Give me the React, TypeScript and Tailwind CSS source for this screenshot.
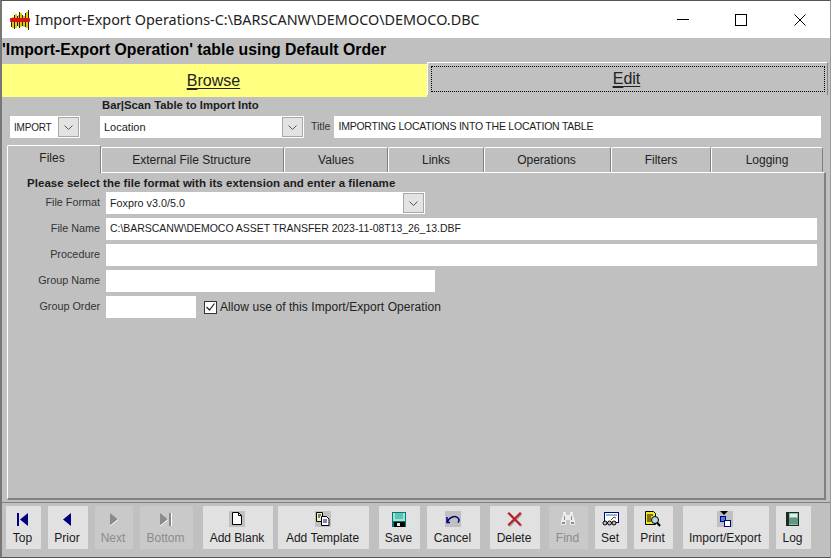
import type { ReactNode } from "react";

function Logo() {
  return (
    <svg width="20" height="20" viewBox="0 0 20 20">
      <path d="M1 8h1v9H1zM4 5h1v14H4zM7 6h1v10H7zM9 2h1v16H9zM12 5h1v11h-1zM15 3h1v14h-1zM18 0h1v20h-1z" fill="#2e2400" />
      <path d="M2 7h2v11H2zM5 4h2v14H5zM8 5h1v12H8zM10 3h2v14h-2zM13 6h2v11h-2zM16 2h2v16h-2z" fill="#d8c820" />
      <rect x="0" y="8" width="20" height="4" rx="1" fill="#e01010" />
    </svg>
  );
}

function ComboArrow() {
  return (
    <span className="flex items-center justify-center w-[21px] h-[20px] mr-[1px] bg-[#e3e3e3] border border-[#a8a8a8]">
      <svg width="9" height="5" viewBox="0 0 9 5" fill="none" stroke="#555" strokeWidth="1">
        <path d="M0.500 0.500 4.500 4.500 8.500 0.500" />
      </svg>
    </span>
  );
}

const icons: Record<string, ReactNode> = {
  Top: (
    <svg width="13" height="13" viewBox="0 0 13 13">
      <path d="M1 0h2v13H1zM12 0v13L4 6.500z" fill="#00007f" />
    </svg>
  ),
  Prior: (
    <svg width="13" height="13" viewBox="0 0 13 13">
      <path d="M10 0v13L2 6.500z" fill="#00007f" />
    </svg>
  ),
  Next: (
    <svg width="13" height="13" viewBox="0 0 13 13">
      <path d="M3 0v13l8-6.500z" fill="#8a8a8a" />
      <path d="M3 13l8-6.500" stroke="#fff" strokeWidth="1" />
    </svg>
  ),
  Bottom: (
    <svg width="13" height="13" viewBox="0 0 13 13">
      <path d="M1 0v13l8-6.500zM10 0h2v13h-2z" fill="#8a8a8a" />
      <path d="M1 13l8-6.500M12.500 0v13" stroke="#fff" strokeWidth="1" />
    </svg>
  ),
  "Add Blank": (
    <span className="flex w-[16px] h-[16px] items-center justify-center bg-[#c0c0c0]">
      <svg width="12" height="14" viewBox="0 0 12 14" fill="#fff" stroke="#000">
        <path d="M1.500 0.500h6l3 3v9h-9z" />
        <path d="M7.500 0.500v3h3" fill="none" />
      </svg>
    </span>
  ),
  "Add Template": (
    <span className="flex w-[16px] h-[16px] items-center justify-center bg-[#c0c0c0]">
      <svg width="14" height="14" viewBox="0 0 14 14" fill="#fff" stroke="#000">
        <path d="M0.500 0.500h6v9h-6z" fill="#f8f4b0" />
        <path d="M5.500 4.500h5l2.500 2.500v6.500h-7.500z" />
        <path d="M2 3h3M2 5h2M7 8h4M7 10h4" strokeWidth="1" stroke="#00007f" />
      </svg>
    </span>
  ),
  Save: (
    <svg width="14" height="15" viewBox="0 0 14 15">
      <rect width="14" height="15" fill="#007878" />
      <rect x="1" y="1" width="12" height="8" fill="#a8e0d4" />
      <rect x="3" y="1" width="8" height="6" fill="#5cc4b4" />
      <rect x="2" y="10" width="11" height="5" fill="#000" />
      <rect x="5" y="11" width="3" height="3" fill="#e8e8e8" />
    </svg>
  ),
  Cancel: (
    <span className="flex w-[16px] h-[16px] items-center justify-center bg-[#c0c0c0]">
      <svg width="14" height="10" viewBox="0 0 14 10" fill="none" stroke="#00007f" strokeWidth="1.500">
        <path d="M4 8.500H1V3M1.500 7.500C3.500 3 9 1 12 4c1 1 1.200 3 0 4.500" />
      </svg>
    </span>
  ),
  Delete: (
    <svg width="15" height="15" viewBox="0 0 15 15" strokeWidth="2.200" strokeLinecap="square" fill="none">
      <path d="M3 2.500 14 13.500M14 2.500 3 13.500" stroke="#a8a8a8" />
      <path d="M2 1.500 13 12.500M13 1.500 2 12.500" stroke="#b82028" />
    </svg>
  ),
  Find: (
    <svg width="16" height="14" viewBox="0 0 16 14">
      <path d="M3 0h3v3h4V0h3v3l2 6v4h-5V8H6v5H1V9l2-6z" fill="#ececec" />
      <path d="M4 4h1v4H4zM11 4h1v4h-1zM2 10h3v2H2zM11 10h3v2h-3z" fill="#8e8e8e" />
    </svg>
  ),
  Set: (
    <svg width="17" height="14" viewBox="0 0 17 14" fill="none">
      <rect x="2.500" y="0.500" width="14" height="10" fill="#fff" stroke="#000080" />
      <path d="M4 3h11" stroke="#008080" />
      <path d="M9 8l3-3 2 1" stroke="#a02020" />
      <circle cx="3" cy="11" r="2" fill="#c0c0c0" stroke="#000" />
      <circle cx="7.500" cy="11" r="2" fill="#c0c0c0" stroke="#000" />
      <circle cx="12" cy="11" r="2" fill="#c0c0c0" stroke="#000" />
    </svg>
  ),
  Print: (
    <svg width="16" height="16" viewBox="0 0 16 16">
      <path d="M0.500 0.500h8l2 2v11h-10z" fill="#f2e82a" stroke="#000" />
      <path d="M2 4h6M2 6h4M2 8h4M2 10h4" stroke="#000" />
      <circle cx="10" cy="9" r="3.500" fill="#b8d8e8" stroke="#000" />
      <path d="M12 11.500l3 3.500" stroke="#000" strokeWidth="2" />
    </svg>
  ),
  "Import/Export": (
    <span className="flex w-[16px] h-[16px] items-center justify-center bg-[#c0c0c0]">
      <svg width="12" height="16" viewBox="0 0 12 16">
        <path d="M1 0h8L5 4z" fill="#000" />
        <rect x="1.500" y="5.500" width="5" height="5" fill="#5080e0" stroke="#000080" />
        <rect x="5.500" y="9.500" width="6" height="6" fill="#fff" stroke="#000080" />
      </svg>
    </span>
  ),
  Log: (
    <svg width="13" height="14" viewBox="0 0 13 14">
      <rect width="13" height="14" fill="#1c2c1c" />
      <rect x="3" y="1" width="9" height="12" fill="#8cc0ac" />
      <rect x="4" y="2" width="7" height="3" fill="#e4f0ea" />
      <path d="M3 7h9M3 9h9M3 11h9" stroke="#3c6c58" />
    </svg>
  ),
};

const tools = [
  { label: "Top", cls: "w-[35px]" },
  { label: "Prior", cls: "w-[40px] ml-[7px]" },
  { label: "Next", cls: "w-[38px] ml-[7px]", off: true },
  { label: "Bottom", cls: "w-[53px] ml-[7px]", off: true },
  { label: "Add Blank", cls: "w-[70px] ml-[10px]" },
  { label: "Add Template", cls: "w-[91px] ml-[5px]" },
  { label: "Save", cls: "w-[41px] ml-[10px]" },
  { label: "Cancel", cls: "w-[53px] ml-[7px]" },
  { label: "Delete", cls: "w-[50px] ml-[10px]" },
  { label: "Find", cls: "w-[39px] ml-[9px]", off: true },
  { label: "Set", cls: "w-[32px] ml-[7px]" },
  { label: "Print", cls: "w-[39px] ml-[7px]" },
  { label: "Import/Export", cls: "w-[86px] ml-[10px]" },
  { label: "Log", cls: "w-[35px] ml-[7px]" },
];

const tabs = [
  { label: "External File Structure", cls: "w-[183px] pr-[2px]" },
  { label: "Values", cls: "w-[104px]" },
  { label: "Links", cls: "w-[96px]" },
  { label: "Operations", cls: "w-[127px] pr-[2px]" },
  { label: "Filters", cls: "w-[100px]" },
  { label: "Logging", cls: "w-[112px]" },
];

function Row({ label, children }: { label: string; children: ReactNode }) {
  return (
    <div className="flex items-center h-[22px] mt-[4px] first:mt-0">
      <span className="w-[92px] pb-[1px] text-right text-[10.800px] text-[#333] leading-none">{label}</span>
      <div className="ml-[6px] flex">{children}</div>
    </div>
  );
}

export default function App() {
  return (
    <div className="flex flex-col w-[831px] h-[558px] overflow-hidden bg-[#c0c0c0] font-['Liberation_Sans',sans-serif] text-black border-t border-l-2 border-r border-b border-t-[#555] border-l-[#777] border-r-[#999] border-b-[#555]">
      {/* title bar */}
      <div className="flex items-center h-[37px] shrink-0 bg-white pl-[8px]">
        <Logo />
        <span className="ml-[5px] text-[14.400px] text-[#222] font-['Noto_Sans',sans-serif]">
          Import-Export Operations-C:\BARSCANW\DEMOCO\DEMOCO.DBC
        </span>
        <div className="ml-auto flex items-center pr-[24px]">
          <span className="w-[12px] h-[1px] bg-black" />
          <span className="ml-[46px] w-[12px] h-[12px] border border-black" />
          <svg className="ml-[47px]" width="12" height="12" viewBox="0 0 12 12" stroke="#000" fill="none">
            <path d="M0.500 0.500 11.500 11.500M11.500 0.500 0.500 11.500" />
          </svg>
        </div>
      </div>

      <div className="h-[26px] shrink-0 flex items-center text-[15.800px] font-bold leading-none pb-[3px]">
        'Import-Export Operation' table using Default Order
      </div>

      {/* browse / edit */}
      <div className="flex h-[33px] shrink-0 pr-[2px]">
        <div className="w-[425px] pr-[2px] bg-[#ffff80] flex items-center justify-center text-[16px] text-[#222]">
          <span className="underline underline-offset-2">
            <span className="decoration-2 underline underline-offset-2">B</span>rowse
          </span>
        </div>
        <div className="flex-1 h-[33px] -mt-[2px] border-t border-l border-r border-t-white border-l-white border-r-[#808080] pt-[3px] pl-[3px] pr-[2px]">
          <div className="h-[26px] pr-[3px] border border-dotted border-black flex items-center justify-center text-[16px] text-[#222]">
            <span className="underline underline-offset-2">
              <span className="decoration-2 underline underline-offset-2">E</span>dit
            </span>
          </div>
        </div>
      </div>

      {/* table chooser */}
      <div className="shrink-0 h-[41px] pl-[8px] pr-[9px]">
        <div className="h-[19px] pt-[3px] pl-[92px] text-[11.300px] font-bold leading-[11px] text-[#1c1c1c]">
          Bar|Scan Table to Import Into
        </div>
        <div className="flex h-[22px]">
          <div className="w-[70px] bg-white flex items-center justify-between pl-[4px] text-[10px] tracking-[-0.2px] text-[#222]">
            IMPORT
            <ComboArrow />
          </div>
          <div className="ml-[20px] w-[204px] bg-white flex items-center justify-between pl-[4px] text-[11px] text-[#222]">
            Location
            <ComboArrow />
          </div>
          <span className="ml-[7px] flex items-center text-[10.500px] text-[#333]">Title</span>
          <div className="ml-[4px] flex-1 bg-white flex items-center pl-[4px] pb-[1px] text-[10.500px] tracking-[-0.23px] text-[#1c1c1c]">
            IMPORTING LOCATIONS INTO THE LOCATION TABLE
          </div>
        </div>
      </div>

      {/* tabs */}
      <div className="shrink-0 flex items-end h-[34px] pl-[5px]">
        <div className="relative z-10 w-[94px] h-[28px] -mb-[1px] border-t border-l border-r border-t-white border-l-white border-r-[#808080] rounded-t-[2px] bg-[#c0c0c0] flex items-center justify-center pb-[3px] pr-[4px] text-[12px] text-[#222]">
          Files
        </div>
        {tabs.map((t) => (
          <div
            key={t.label}
            className={`${t.cls} h-[25px] border-t border-l border-r border-t-white border-l-white border-r-[#808080] rounded-t-[2px] flex items-center justify-center text-[12px] text-[#222]`}
          >
            {t.label}
          </div>
        ))}
      </div>

      {/* page */}
      <div className="ml-[5px] mr-[4px] h-[328px] shrink-0 border-t border-l border-r-2 border-b-2 border-t-white border-l-white border-r-[#808080] border-b-[#808080] pt-[4px]">
        <div className="pl-[19px] text-[11.500px] font-bold leading-[13px] text-[#1c1c1c] tracking-[0.04px]">
          Please select the file format with its extension and enter a filename
        </div>
        <div className="mt-[2px] flex flex-col">
          <Row label="File Format">
            <div className="w-[319px] h-[22px] bg-white flex items-center justify-between pl-[4px] text-[10.800px] text-[#222]">
              Foxpro v3.0/5.0
              <ComboArrow />
            </div>
          </Row>
          <Row label="File Name">
            <div className="w-[711px] h-[22px] bg-white flex items-center pl-[4px] pb-[1px] text-[10.500px] tracking-[-0.04px] text-[#1c1c1c]">
              C:\BARSCANW\DEMOCO ASSET TRANSFER 2023-11-08T13_26_13.DBF
            </div>
          </Row>
          <Row label="Procedure">
            <div className="w-[711px] h-[22px] bg-white" />
          </Row>
          <Row label="Group Name">
            <div className="w-[329px] h-[22px] bg-white" />
          </Row>
          <Row label="Group Order">
            <div className="w-[90px] h-[22px] bg-white" />
            <div className="ml-[8px] flex items-center">
              <span className="flex items-center justify-center w-[13px] h-[13px] bg-white border border-[#333]">
                <svg width="9" height="8" viewBox="0 0 9 8" fill="none" stroke="#222" strokeWidth="1.200">
                  <path d="M0.500 4 3.500 7 8.500 0.500" />
                </svg>
              </span>
              <span className="ml-[3px] text-[12px] tracking-[0.07px] text-[#222]">Allow use of this Import/Export Operation</span>
            </div>
          </Row>
        </div>
      </div>

      {/* toolbar */}
      <div className="flex-1 mt-[2px] border-t border-t-[#808080] pt-[3px] pl-[4px]">
        <div className="flex h-[43px]">
          {tools.map((b) => (
            <div
              key={b.label}
              className={`${b.cls} h-[43px] ${b.off ? "bg-[#c9c9c9] text-[#8c8c8c]" : "bg-[#e1e1e1] text-[#1a1a1a]"} flex flex-col items-center pt-[4px] pr-[2px] text-[12px]`}
            >
              <span className="h-[18px] flex items-center justify-center">{icons[b.label]}</span>
              <span className="leading-[14px] mt-[3px] whitespace-nowrap">{b.label}</span>
            </div>
          ))}
        </div>
      </div>
    </div>
  );
}
